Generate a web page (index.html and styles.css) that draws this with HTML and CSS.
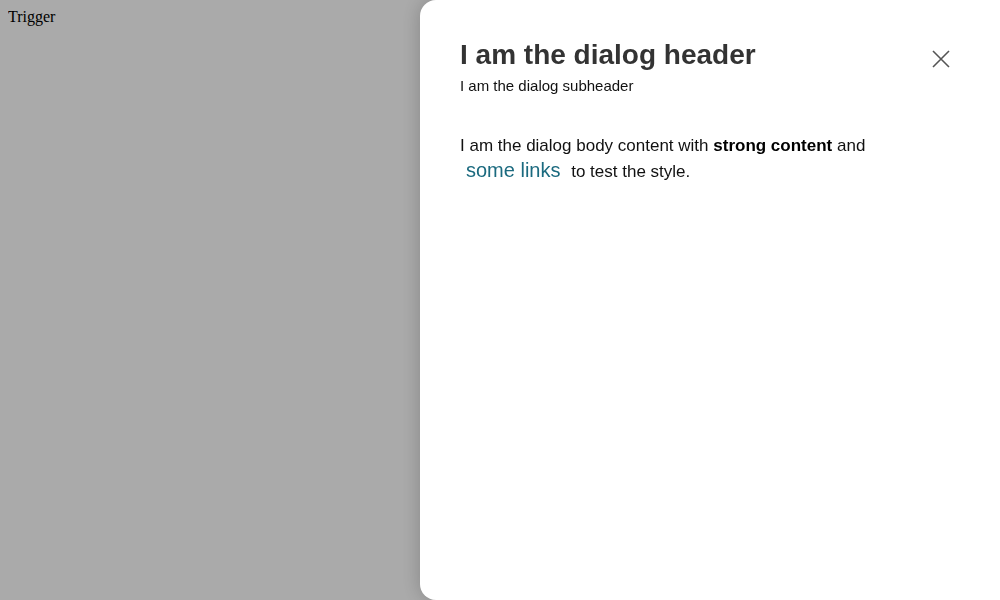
FILE: index.html
```html
<!DOCTYPE html>
<html>
<head>
<meta charset="utf-8">
<link rel="stylesheet" href="styles.css">
</head>
<body>
<span class="trigger">Trigger</span>
<div class="overlay"></div>
<div class="dialog" role="dialog">
  <div class="dialog-head">
    <div class="titles">
      <h1 class="title">I am the dialog header</h1>
      <p class="subtitle">I am the dialog subheader</p>
    </div>
    <button class="close" aria-label="Close">
      <svg width="18" height="18" viewBox="0 0 18 18"><path d="M1 1 L17 17 M17 1 L1 17" stroke="#555" stroke-width="1.6" fill="none"/></svg>
    </button>
  </div>
  <div class="dialog-body">
    <p>I am the dialog body content with <strong>strong content</strong> and <a href="#" class="link">some links</a> to test the style.</p>
  </div>
</div>
</body>
</html>
```
FILE: styles.css
```css
html, body { margin: 0; padding: 0; }
body {
  margin: 8px;
  font-family: "Liberation Serif", serif;
  font-size: 16px;
  color: #000;
  background: #fff;
}
.overlay {
  position: fixed;
  inset: 0;
  background: rgba(0, 0, 0, 0.335);
}
.dialog {
  position: fixed;
  top: 0;
  right: 0;
  bottom: 0;
  width: 580px;
  box-sizing: border-box;
  padding: 39px 40px 40px 40px;
  background: #fff;
  border-radius: 16px 0 0 16px;
  box-shadow: 0 0 20px rgba(0, 0, 0, 0.22);
  font-family: "Liberation Sans", Arial, sans-serif;
}
.dialog-head {
  display: flex;
  justify-content: space-between;
  align-items: flex-start;
}
.title {
  margin: 0;
  font-size: 28px;
  line-height: 32px;
  font-weight: bold;
  color: #333;
}
.subtitle {
  margin: 6px 0 0 0;
  font-size: 15px;
  line-height: 17px;
  color: #111;
}
.close {
  margin: 11px 10px 0 0;
  padding: 0;
  border: 0;
  background: none;
  width: 18px;
  height: 18px;
  display: flex;
}
.dialog-body {
  margin-top: 39px;
  max-width: 420px;
}
.dialog-body p {
  margin: 0;
  font-size: 17px;
  line-height: 26px;
  color: #111;
}
.dialog-body strong { color: #000; }
.link {
  display: inline-block;
  padding: 0 6px;
  font-size: 20px;
  line-height: 20px;
  color: #1b6a7f;
  text-decoration: none;
}
```
